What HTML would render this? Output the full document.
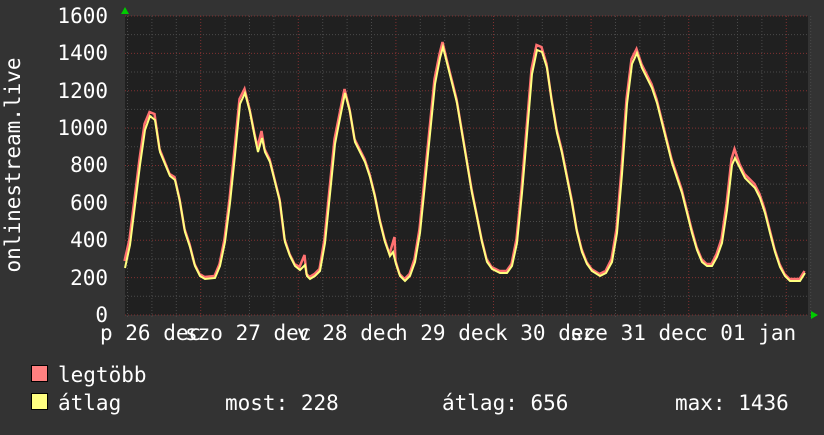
<!DOCTYPE html><html><head><style>
body{margin:0;width:824px;height:430px;background:#333;overflow:hidden}
svg text{font-family:"DejaVu Sans Mono","Liberation Mono",monospace;font-size:21px;fill:#fff}
</style></head><body>
<svg width="824" height="430" xmlns="http://www.w3.org/2000/svg">
<rect x="125" y="16" width="683" height="299" fill="#202020"/>
<g id="grid"></g>
<text x="108" y="23" text-anchor="end">1600</text>
<text x="108" y="60" text-anchor="end">1400</text>
<text x="108" y="98" text-anchor="end">1200</text>
<text x="108" y="135" text-anchor="end">1000</text>
<text x="108" y="172" text-anchor="end">800</text>
<text x="108" y="210" text-anchor="end">600</text>
<text x="108" y="247" text-anchor="end">400</text>
<text x="108" y="285" text-anchor="end">200</text>
<text x="108" y="322" text-anchor="end">0</text>
<text transform="translate(20,165) rotate(-90)" text-anchor="middle">onlinestream.live</text>
<g>
<text x="100" y="340" xml:space="preserve">p 26 dec</text>
<text x="185" y="340" xml:space="preserve">szo 27 dec</text>
<text x="297" y="340" xml:space="preserve">v 28 dec</text>
<text x="395" y="340" xml:space="preserve">h 29 dec</text>
<text x="495" y="340" xml:space="preserve">k 30 dec</text>
<text x="570" y="340" xml:space="preserve">sze 31 dec</text>
<text x="695" y="340" xml:space="preserve">c 01 jan</text>
</g>
<polyline fill="none" stroke="#ff7070" stroke-width="2.5" transform="translate(-0.5,-1)" points="125,262 130,240 135,200 140,160 145,125 150,113 155,115 160,150 170,175 175,178 180,200 185,230 190,245 195,265 200,275 205,278 215,277 220,265 225,240 230,200 235,150 240,100 245,90 250,110 255,135 258,148 262,132 265,150 270,160 275,180 280,200 285,240 290,255 295,265 300,268 305,256 307,275 310,278 315,275 320,270 325,240 330,190 335,140 340,115 345,90 350,110 355,140 360,150 365,160 370,175 375,195 380,220 385,240 390,255 395,238 396,262 400,275 405,280 410,275 415,260 420,230 425,180 430,130 435,80 440,55 443,43 447,60 452,80 457,100 462,130 467,160 472,190 477,215 482,240 487,260 492,268 500,272 507,272 512,265 517,240 522,190 527,130 532,70 537,46 542,48 547,65 552,100 557,130 562,150 567,175 572,200 577,230 582,250 587,263 592,270 600,275 606,272 612,260 617,230 622,170 627,100 632,60 637,50 642,65 647,75 652,85 657,100 662,120 667,140 672,160 677,175 682,190 687,210 692,230 697,248 702,260 707,265 712,265 717,255 722,240 727,205 732,160 735,150 740,165 745,175 750,180 755,185 760,195 765,210 770,230 775,250 780,265 785,275 790,280 800,280 805,272"/>
<polyline fill="none" stroke="#ffff80" stroke-width="2" points="125,268 130,245 135,205 140,165 145,130 150,116 155,120 160,152 170,176 175,180 180,202 185,232 190,247 195,266 200,276 205,279 215,278 220,266 225,242 230,203 235,155 240,104 245,93 250,112 255,138 258,152 262,138 265,152 270,162 275,182 280,202 285,242 290,256 295,266 300,270 305,265 307,276 310,279 315,276 320,271 325,243 330,194 335,144 340,118 345,93 350,112 355,142 360,152 365,162 370,177 375,197 380,222 385,242 390,256 393,252 396,264 400,276 405,281 410,276 415,262 420,233 425,184 430,134 435,84 440,58 443,47 447,63 452,83 457,103 462,133 467,163 472,193 477,217 482,242 487,262 492,269 500,273 507,273 512,266 517,243 522,193 527,134 532,74 537,50 542,52 547,68 552,103 557,133 562,153 567,178 572,203 577,232 582,252 587,264 592,271 600,276 606,273 612,262 617,233 622,174 627,104 632,64 637,53 642,68 647,78 652,88 657,103 662,123 667,143 672,163 677,178 682,193 687,213 692,233 697,250 702,262 707,266 712,266 717,257 722,243 727,210 732,165 735,158 740,168 745,178 750,183 755,188 760,198 765,213 770,233 775,252 780,267 785,276 790,281 800,281 805,273"/>
<polygon points="121,14 129,14 125,7" fill="#0c0"/>
<polygon points="811,311 811,319 818,315" fill="#0c0"/>
<rect x="31.5" y="365.5" width="16" height="16" fill="#ff8080" stroke="#000"/>
<rect x="31.5" y="393.5" width="16" height="16" fill="#ffff80" stroke="#000"/>
<text x="58" y="382">legtöbb</text>
<text x="58" y="410">átlag</text>
<text x="225" y="410">most: 228</text>
<text x="442" y="410">átlag: 656</text>
<text x="675" y="410">max: 1436</text>
</svg>
<script>
var g=document.getElementById('grid'),ns='http://www.w3.org/2000/svg';
function L(x1,y1,x2,y2,c){var l=document.createElementNS(ns,'line');l.setAttribute('x1',x1);l.setAttribute('y1',y1);l.setAttribute('x2',x2);l.setAttribute('y2',y2);l.setAttribute('stroke',c);l.setAttribute('stroke-dasharray','1,2');g.appendChild(l);}
for(var i=0;i<=16;i++){var y=315-i*18.69;if(i%2==0)L(125,y,808,y,'#803030');else L(125,y,808,y,'#4a4a4a');}
for(var k=0;k<29;k++){var x=127.5+k*24.4;var maj=(k%4==3);L(x,16,x,318,maj?'#803030':'#4a4a4a');}
</script>
</body></html>
